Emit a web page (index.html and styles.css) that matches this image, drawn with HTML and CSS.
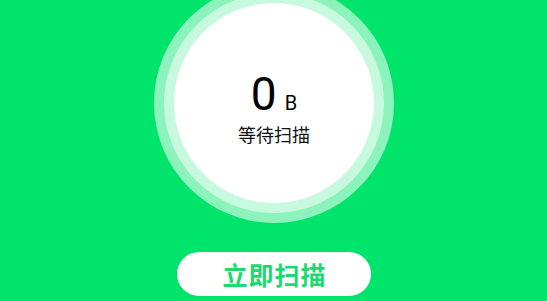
FILE: index.html
```html
<!doctype html>
<html lang="zh-CN">
  <head>
    <meta charset="UTF-8" />
    <meta name="viewport" content="width=device-width, initial-scale=1.0" />
    <title>清理</title>
    <link rel="stylesheet" href="styles.css">
  </head>
  <body>
    <main class="scan">
      <div class="ring-outer">
        <div class="ring-middle">
          <div class="ring-inner">
            <div class="size"><span class="size-num">0</span><span class="size-unit">B</span></div>
            <p class="state">等待扫描</p>
          </div>
        </div>
      </div>

      <button class="btn">立即扫描</button>
    </main>
  </body>
</html>
```

FILE: styles.css
```css
* {
  box-sizing: border-box;
  margin: 0;
  padding: 0;
}
html,
body {
  height: 100%;
  overflow: hidden;
}
body {
  background-color: #00e46b;
  font-family: Roboto, 'Noto Sans CJK SC', sans-serif;
  color: #111;
}
.scan {
  display: flex;
  flex-direction: column;
  align-items: center;
  padding-left: 1px;
}
.ring-outer {
  width: 240px;
  height: 240px;
  margin-top: -17px;
  border-radius: 50%;
  background-color: rgba(255, 255, 255, 0.55);
  display: flex;
  align-items: center;
  justify-content: center;
}
.ring-middle {
  width: 220px;
  height: 220px;
  border-radius: 50%;
  background-color: rgba(255, 255, 255, 0.5);
  display: flex;
  align-items: center;
  justify-content: center;
}
.ring-inner {
  width: 200px;
  height: 200px;
  border-radius: 50%;
  background-color: #ffffff;
  display: flex;
  flex-direction: column;
  align-items: center;
  justify-content: center;
  padding-top: 8px;
}
.size {
  display: flex;
  align-items: baseline;
  line-height: 1;
}
.size-num {
  font-size: 46px;
  color: #000;
}
.size-unit {
  font-size: 20px;
  margin-left: 8px;
  color: #000;
}
.state {
  margin-top: 8px;
  font-family: 'Noto Sans CJK SC', sans-serif;
  font-size: 18px;
  line-height: 1;
  color: #111;
}
.btn {
  margin-top: 29px;
  width: 194px;
  height: 44px;
  border: none;
  border-radius: 22px;
  background-color: #ffffff;
  color: #1ed96f;
  font-family: 'Noto Sans CJK SC', sans-serif;
  font-size: 25px;
  font-weight: 700;
  letter-spacing: 1px;
  text-indent: 1px;
}
```
